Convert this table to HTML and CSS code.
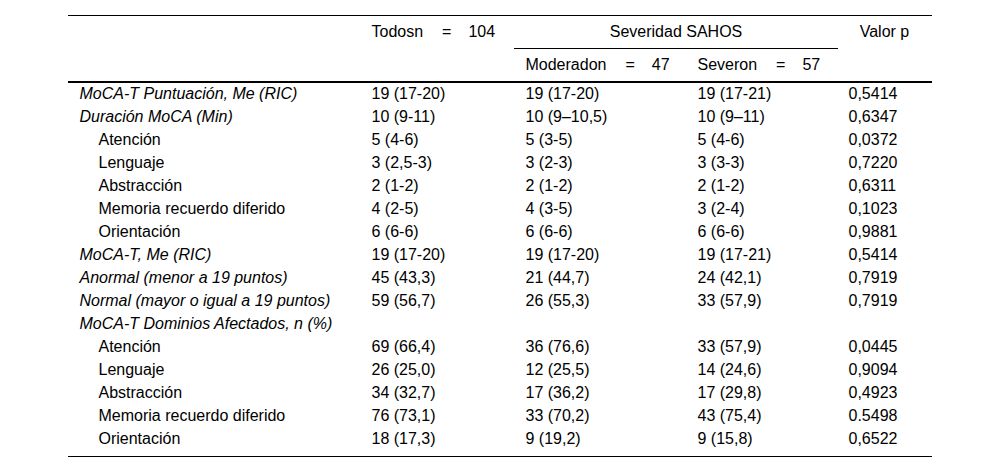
FILE: index.html
```html
<!DOCTYPE html>
<html lang="es">
<head>
<meta charset="utf-8">
<title>MoCA-T y severidad SAHOS</title>
<link rel="stylesheet" href="styles.css">
</head>
<body>
<table class="tbl">
  <colgroup>
    <col class="c1"><col class="c2"><col class="c3"><col class="c4"><col class="c5">
  </colgroup>
  <thead>
    <tr class="h1">
      <th rowspan="2" class="hb"></th>
      <th rowspan="2" class="hb top">Todosn<span class="eq">=</span>104</th>
      <th colspan="2" class="sev">Severidad SAHOS</th>
      <th rowspan="2" class="hb top center">Valor p</th>
    </tr>
    <tr class="h2">
      <th class="hb">Moderadon<span class="eq">=</span>47</th>
      <th class="hb">Severon<span class="eq">=</span>57</th>
    </tr>
  </thead>
  <tbody>
    <tr><td class="it">MoCA-T Puntuación, Me (RIC)</td><td>19 (17-20)</td><td>19 (17-20)</td><td>19 (17-21)</td><td>0,5414</td></tr>
    <tr><td class="it">Duración MoCA (Min)</td><td>10 (9-11)</td><td>10 (9–10,5)</td><td>10 (9–11)</td><td>0,6347</td></tr>
    <tr><td class="ind">Atención</td><td>5 (4-6)</td><td>5 (3-5)</td><td>5 (4-6)</td><td>0,0372</td></tr>
    <tr><td class="ind">Lenguaje</td><td>3 (2,5-3)</td><td>3 (2-3)</td><td>3 (3-3)</td><td>0,7220</td></tr>
    <tr><td class="ind">Abstracción</td><td>2 (1-2)</td><td>2 (1-2)</td><td>2 (1-2)</td><td>0,6311</td></tr>
    <tr><td class="ind">Memoria recuerdo diferido</td><td>4 (2-5)</td><td>4 (3-5)</td><td>3 (2-4)</td><td>0,1023</td></tr>
    <tr><td class="ind">Orientación</td><td>6 (6-6)</td><td>6 (6-6)</td><td>6 (6-6)</td><td>0,9881</td></tr>
    <tr><td class="it">MoCA-T, Me (RIC)</td><td>19 (17-20)</td><td>19 (17-20)</td><td>19 (17-21)</td><td>0,5414</td></tr>
    <tr><td class="it">Anormal (menor a 19 puntos)</td><td>45 (43,3)</td><td>21 (44,7)</td><td>24 (42,1)</td><td>0,7919</td></tr>
    <tr><td class="it">Normal (mayor o igual a 19 puntos)</td><td>59 (56,7)</td><td>26 (55,3)</td><td>33 (57,9)</td><td>0,7919</td></tr>
    <tr><td class="it">MoCA-T Dominios Afectados, n (%)</td><td></td><td></td><td></td><td></td></tr>
    <tr><td class="ind">Atención</td><td>69 (66,4)</td><td>36 (76,6)</td><td>33 (57,9)</td><td>0,0445</td></tr>
    <tr><td class="ind">Lenguaje</td><td>26 (25,0)</td><td>12 (25,5)</td><td>14 (24,6)</td><td>0,9094</td></tr>
    <tr><td class="ind">Abstracción</td><td>34 (32,7)</td><td>17 (36,2)</td><td>17 (29,8)</td><td>0,4923</td></tr>
    <tr><td class="ind">Memoria recuerdo diferido</td><td>76 (73,1)</td><td>33 (70,2)</td><td>43 (75,4)</td><td>0.5498</td></tr>
    <tr class="last"><td class="ind">Orientación</td><td>18 (17,3)</td><td>9 (19,2)</td><td>9 (15,8)</td><td>0,6522</td></tr>
  </tbody>
</table>
</body>
</html>
```
FILE: styles.css
```css
html, body {
  margin: 0;
  padding: 0;
  background: #fff;
}

body {
  font-family: "Liberation Sans", Arial, sans-serif;
  font-size: 16px;
  color: #000;
}

.tbl {
  width: 863px;
  margin: 15px auto 0;
  border-collapse: separate;
  border-spacing: 0;
  table-layout: fixed;
  border-top: 1px solid #000;
}

.c1 { width: 292px; }
.c2 { width: 154px; }
.c3 { width: 172px; }
.c4 { width: 151px; }
.c5 { width: 94px; }

th, td {
  text-align: left;
  font-weight: normal;
  line-height: 18px;
  padding: 2px 11px 3px;
  white-space: nowrap;
}

th {
  padding-top: 7px;
  padding-bottom: 8px;
}

.h1 th { height: 18px; }
.h2 th { height: 18px; padding-top: 7px; padding-bottom: 7px; }

.top { vertical-align: top; }
.center { text-align: center; }

.sev {
  text-align: center;
  border-bottom: 1px solid #000;
  padding-bottom: 7px;
}

.hb { border-bottom: 2px solid #000; }

.eq {
  display: inline-block;
  margin: 0 17px 0 19px;
}

.it { font-style: italic; }
.ind { padding-left: 30px; }

.last td {
  padding-bottom: 8px;
  border-bottom: 1px solid #000;
}
```
